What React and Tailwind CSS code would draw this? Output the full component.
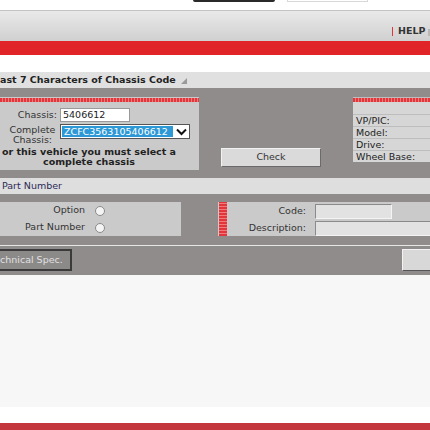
function Radio() {
  return <div className="ml-[10px] w-[10px] h-[10px] rounded-full bg-[#f4f4f4] border border-[#8a8a8a]"></div>
}

function InfoRow({ label }) {
  return (
    <div className="h-[11px] mt-[1px] bg-[#d6d6d6] pl-[3px] leading-[11px] text-[#222]">{label}</div>
  )
}

function App() {
  const dotted =
    'bg-[repeating-linear-gradient(90deg,#e3363a_0px,#e3363a_2px,#f07a7c_2px,#f07a7c_3px)]'

  return (
    <div className="w-[430px] h-[430px] overflow-hidden bg-white font-['DejaVu_Sans',sans-serif] text-[9.5px] text-[#222]">
      {/* Top chrome */}
      <div className="h-[10px] flex items-start pl-[193px]">
        <div className="w-[82px] h-[2px] bg-[#2a2a2a] rounded-b-[3px]"></div>
        <div className="ml-[12px] w-[81px] h-[2px] border-b border-x border-[#d8d8d8]"></div>
      </div>

      {/* Header band */}
      <div className="h-[31px] border-t border-[#c4c4c4] bg-[linear-gradient(#e9e9e9,#d0d0d0)] flex items-end pb-[5px] pl-[392px]">
        <div className="w-[2px] h-[9px] bg-[#e0353a]"></div>
        <div className="ml-[5px] font-bold text-[#333] leading-[10px]">HELP</div>
        <div className="ml-[3px] w-[3px] h-[7px] bg-[#b8b8b8]"></div>
      </div>
      <div className="h-[14px] bg-[#e02427]"></div>
      <div className="h-[17px] bg-white"></div>

      {/* Section title */}
      <div className="h-[16px] bg-[#e0e0e0] flex items-center">
        <span className="font-bold text-[#222]">ast 7 Characters of Chassis Code</span>
        <svg width="6" height="6" viewBox="0 0 6 6" className="ml-[5px] mt-[2px]">
          <polygon points="6,0 6,6 0,6" fill="#9a9a9a" />
        </svg>
      </div>

      {/* Main gray area */}
      <div className="h-[187px] bg-[#908c8c] pt-[9px]">
        <div className="flex items-start h-[73px]">
          {/* Chassis panel */}
          <div className="w-[199px] h-[73px] bg-[#cacaca]">
            <div className={`h-[4px] mt-[1px] ${dotted}`}></div>
            <div className="flex items-center mt-[6px]">
              <div className="w-[57px] text-right text-[#333]">Chassis:</div>
              <div className="ml-[3px] w-[70px] h-[14px] bg-white border border-[#9a9a9a] pl-[2px] leading-[12px] text-[#222]">
                5406612
              </div>
            </div>
            <div className="flex items-start mt-[2px]">
              <div className="w-[57px] text-center pl-[8px] leading-[10px] pt-[1px] text-[#333]">
                Complete<br />Chassis:
              </div>
              <div className="ml-[3px] w-[130px] h-[15px] bg-white border border-[#555] flex items-center">
                <div className="w-[111px] h-[11px] ml-[1px] bg-[#2d98d6] text-white leading-[11px] pl-[2px]">
                  ZCFC3563105406612
                </div>
                <div className="flex-1 flex justify-center">
                  <svg width="11" height="8" viewBox="0 0 11 8">
                    <polyline points="1,1.5 5.5,6 10,1.5" fill="none" stroke="#111" strokeWidth="2" />
                  </svg>
                </div>
              </div>
            </div>
            <div className="mt-[2px] w-[178px] text-center font-bold leading-[10px] text-[#222]">
              or this vehicle you must select a<br />complete chassis
            </div>
          </div>

          {/* Check button */}
          <div className="ml-[22px] mt-[51px] w-[100px] h-[19px] bg-[#dadada] border border-t-[#f2f2f2] border-l-[#f2f2f2] border-b-[#6a6a6a] border-r-[#6a6a6a] flex items-center justify-center text-[#333]">
            Check
          </div>

          {/* Vehicle info panel */}
          <div className="ml-[32px] flex-1 h-[65px] bg-[#bdbdbd]">
            <div className={`h-[4px] mt-[1px] ${dotted}`}></div>
            <div className="h-[12px] bg-[#d6d6d6]"></div>
            <InfoRow label="VP/PIC:" />
            <InfoRow label="Model:" />
            <InfoRow label="Drive:" />
            <InfoRow label="Wheel Base:" />
          </div>
        </div>

        {/* Part number strip */}
        <div className="mt-[8px] h-[16px] bg-[#dedede] flex items-center pl-[2px] text-[#2b2b58]">
          Part Number
        </div>

        <div className="mt-[8px] flex h-[34px]">
          <div className="w-[181px] bg-[#cacaca] flex flex-col justify-center gap-[5px]">
            <div className="flex items-center h-[12px]">
              <div className="w-[85px] text-right text-[#333]">Option</div>
              <Radio />
            </div>
            <div className="flex items-center h-[12px]">
              <div className="w-[85px] text-right text-[#333]">Part Number</div>
              <Radio />
            </div>
          </div>

          <div className="ml-[37px] flex-1 bg-[#cacaca] flex">
            <div className="ml-[1px] w-[8px] h-full bg-[repeating-linear-gradient(0deg,#e3363a_0px,#e3363a_2px,#f07a7c_2px,#f07a7c_3px)]"></div>
            <div className="flex-1 flex flex-col pt-[2px] gap-[2px]">
              <div className="flex items-center">
                <div className="w-[79px] text-right text-[#333]">Code:</div>
                <div className="ml-[9px] w-[77px] h-[15px] bg-[#e2e2e2] border border-t-[#8a8a8a] border-l-[#8a8a8a] border-b-[#f4f4f4] border-r-[#f4f4f4]"></div>
              </div>
              <div className="flex items-center">
                <div className="w-[79px] text-right text-[#333]">Description:</div>
                <div className="ml-[9px] flex-1 h-[15px] bg-[#e2e2e2] border border-t-[#8a8a8a] border-l-[#8a8a8a] border-b-[#f4f4f4] border-r-0"></div>
              </div>
            </div>
          </div>
        </div>

        <div className="mt-[9px] h-[1px] bg-[#e6e6e6]"></div>

        <div className="mt-[3px] flex h-[22px]">
          <div className="w-[72px] h-[22px] bg-[#8c8989] border-2 border-[#3a3a3a] border-l-0 flex items-center text-[#e0e0e0] leading-[10px]">
            chnical Spec.
          </div>
          <div className="ml-auto w-[28px] h-[22px] bg-[#d8d8d8] border border-[#555] border-r-0 border-t-[#f2f2f2] border-l-[#f2f2f2]"></div>
        </div>
      </div>

      {/* Footer */}
      <div className="h-[132px] bg-[#f7f7f7]"></div>
      <div className="h-[16px] bg-white"></div>
      <div className="h-[7px] bg-[#c3373c]"></div>
    </div>
  )
}

export default App
